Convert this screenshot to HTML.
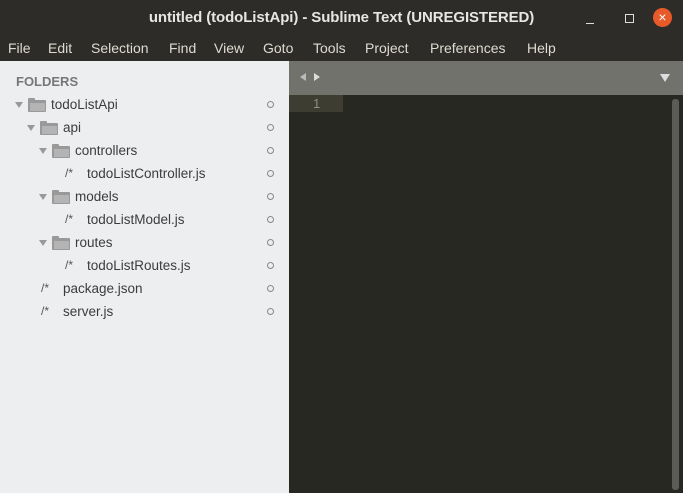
<!DOCTYPE html>
<html><head><style>
*{margin:0;padding:0;box-sizing:border-box}
body{width:683px;height:493px;overflow:hidden;font-family:"Liberation Sans",sans-serif;background:#272822;position:relative}
#title{position:absolute;left:0;top:0;width:683px;height:35px;background:#2d2c29;color:#e8e6e3;font-weight:bold;font-size:15px;line-height:36px;text-align:center;letter-spacing:-0.1px}
#menu{position:absolute;left:0;top:35px;width:683px;height:26px;background:#2d2c29;color:#dfdbd2;font-size:14px;line-height:27px}
#menu span{position:absolute;top:0}
#side{position:absolute;left:0;top:61px;width:289px;height:432px;background:#edeeef}
#tabs{position:absolute;left:289px;top:61px;width:394px;height:34px;background:#71726b}
.row{position:absolute;font-size:13.5px;color:#3c3c3c;height:20px;line-height:20px}
.c{position:absolute;left:267px;width:7px;height:7px;border:1px solid #888;border-radius:50%}
.arr{position:absolute;width:0;height:0;border-left:4px solid transparent;border-right:4px solid transparent;border-top:6px solid #999}
.fold{position:absolute;width:18px;height:12px;background:#999;border-radius:1px}
.fold:before{content:"";position:absolute;left:0;top:-2px;width:7px;height:3px;background:#999;border-radius:1px 1px 0 0}
.fold:after{content:"";position:absolute;left:2px;top:3px;width:15px;height:8px;background:#b4b4b4}
.cm{position:absolute;font-size:12px;color:#555}
</style></head><body>
<div id="title">untitled (todoListApi) - Sublime Text (UNREGISTERED)</div>
<div style="position:absolute;left:586px;top:23px;width:8px;height:1px;background:#ddd"></div>
<div style="position:absolute;left:625px;top:14px;width:9px;height:9px;border:1.5px solid #ddd"></div>
<div style="position:absolute;left:653px;top:8px;width:19px;height:19px;border-radius:50%;background:#e85a2a;color:#fff;font-size:14px;line-height:18px;text-align:center">×</div>
<div id="menu"><span style="left:8px">File</span><span style="left:48px">Edit</span><span style="left:91px">Selection</span><span style="left:169px">Find</span><span style="left:214px">View</span><span style="left:263px">Goto</span><span style="left:313px">Tools</span><span style="left:365px">Project</span><span style="left:430px">Preferences</span><span style="left:527px">Help</span></div>
<div id="side">
<div style="position:absolute;left:16px;top:13px;font-size:13px;font-weight:bold;color:#777">FOLDERS</div>
</div>
<div id="tabs">
<div style="position:absolute;left:11px;top:12px;border-top:4.5px solid transparent;border-bottom:4.5px solid transparent;border-right:6px solid #bbb"></div>
<div style="position:absolute;left:25px;top:12px;border-top:4.5px solid transparent;border-bottom:4.5px solid transparent;border-left:6px solid #ddd"></div>
<div style="position:absolute;left:371px;top:13px;border-left:5px solid transparent;border-right:5px solid transparent;border-top:8px solid #ddd"></div>
</div>
<div style="position:absolute;left:289px;top:95px;width:54px;height:17px;background:#3e3d32"></div>
<div style="position:absolute;left:313px;top:95px;font-size:13px;line-height:17px;color:#8f908a">1</div>
<div style="position:absolute;left:672px;top:99px;width:7px;height:391px;background:#5b5c56;border-radius:3px"></div>

<div class="arr" style="left:15px;top:102px"></div><div class="fold" style="left:28px;top:100px"></div><div class="row" style="left:51px;top:95px">todoListApi</div><div class="c" style="top:101px"></div>
<div class="arr" style="left:27px;top:125px"></div><div class="fold" style="left:40px;top:123px"></div><div class="row" style="left:63px;top:118px">api</div><div class="c" style="top:124px"></div>
<div class="arr" style="left:39px;top:148px"></div><div class="fold" style="left:52px;top:146px"></div><div class="row" style="left:75px;top:141px">controllers</div><div class="c" style="top:147px"></div>
<div class="cm" style="left:65px;top:166px">/*</div><div class="row" style="left:87px;top:164px">todoListController.js</div><div class="c" style="top:170px"></div>
<div class="arr" style="left:39px;top:194px"></div><div class="fold" style="left:52px;top:192px"></div><div class="row" style="left:75px;top:187px">models</div><div class="c" style="top:193px"></div>
<div class="cm" style="left:65px;top:212px">/*</div><div class="row" style="left:87px;top:210px">todoListModel.js</div><div class="c" style="top:216px"></div>
<div class="arr" style="left:39px;top:240px"></div><div class="fold" style="left:52px;top:238px"></div><div class="row" style="left:75px;top:233px">routes</div><div class="c" style="top:239px"></div>
<div class="cm" style="left:65px;top:258px">/*</div><div class="row" style="left:87px;top:256px">todoListRoutes.js</div><div class="c" style="top:262px"></div>
<div class="cm" style="left:41px;top:281px">/*</div><div class="row" style="left:63px;top:279px">package.json</div><div class="c" style="top:285px"></div>
<div class="cm" style="left:41px;top:304px">/*</div><div class="row" style="left:63px;top:302px">server.js</div><div class="c" style="top:308px"></div>
</body></html>
